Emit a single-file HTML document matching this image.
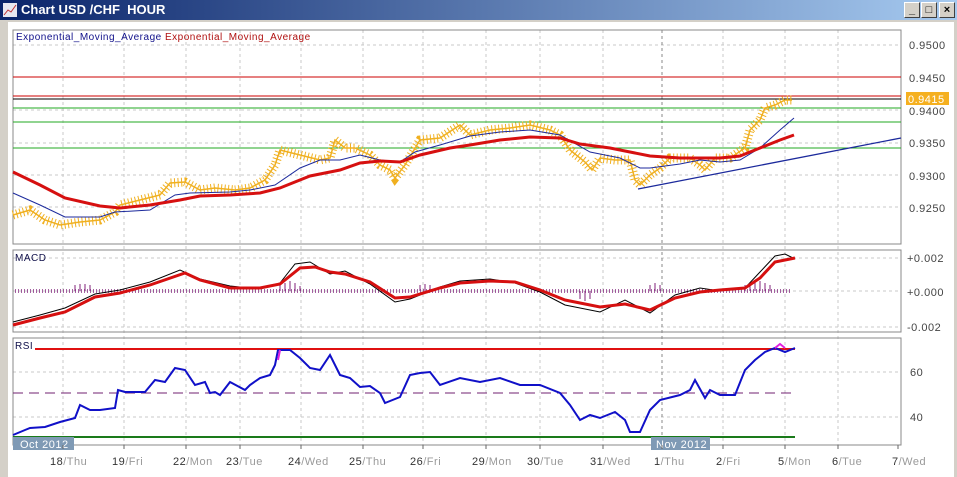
<!DOCTYPE html>
<html><head><style>
body{margin:0;width:957px;height:477px;overflow:hidden;background:#d4d0c8;font-family:"Liberation Sans",sans-serif;}
#t{position:absolute;left:0;top:0;width:957px;height:20px;background:linear-gradient(90deg,#0a246a,#a6caf0);}
#t span{position:absolute;left:21px;top:2px;color:#fff;font-weight:bold;font-size:13px;}
.b{position:absolute;top:2px;width:14px;height:14px;background:#d4d0c8;border:1px solid;border-color:#fff #404040 #404040 #fff;font-size:11px;text-align:center;line-height:14px;font-weight:bold}
svg{position:absolute;left:0;top:0}
</style></head><body>
<div id="t"><span>Chart USD /CHF &nbsp;HOUR</span></div>
<div class="b" style="left:904px">_</div><div class="b" style="left:921px">□</div><div class="b" style="left:939px">×</div>
<svg width="957" height="477" font-family="Liberation Sans, sans-serif">
<rect x="3" y="3" width="14" height="14" fill="#e8e8f0"/><path d="M4 15L8 10L11 12L16 5" stroke="#c03030" fill="none"/>
<rect x="8" y="22" width="946" height="455" fill="#fff"/>
<rect x="3" y="20" width="5" height="457" fill="#d4d0c8"/>
<g stroke="#c8c8c8" stroke-dasharray="3,3">
<path d="M63 30V445M124 30V445M186 30V445M240 30V445M301 30V445M363 30V445M423 30V445M486 30V445M540 30V445M603 30V445M723 30V445M785 30V445M838 30V445M13 45H901M13 77H901M13 110H901M13 143H901M13 175H901M13 207H901M13 258H901M13 291H901M13 327H901M13 372H901M13 417H901"/>
</g>
<path d="M662 30V445" stroke="#888" stroke-dasharray="3,3"/>
<g fill="none" stroke="#888"><rect x="13" y="30" width="888" height="214"/><rect x="13" y="250" width="888" height="82"/><rect x="13" y="338" width="888" height="107"/></g>
<g stroke-width="1"><path d="M13 77H901M13 96H901" stroke="#c00"/><path d="M13 99H901" stroke="#000"/><path d="M13 108H901M13 122H901M13 148H901" stroke="#2a2"/></g>
<path d="M638 189L901 138" stroke="#1c2a9c" stroke-width="1.3"/>
<polyline fill="none" stroke="#f0b020" stroke-width="1.5" points="13,215 30,210 45,220 60,225 80,222 100,220 115,212 120,205 140,200 160,195 170,183 185,182 200,190 215,188 235,190 250,188 265,180 275,165 280,150 300,155 320,160 330,158 335,140 345,148 355,148 370,155 380,165 390,170 395,178 405,165 420,140 440,138 460,125 470,135 490,130 510,128 530,125 550,130 560,135 570,150 585,162 592,170 600,158 615,160 630,160 635,180 640,185 650,175 660,168 670,158 690,158 700,165 705,170 715,158 730,158 745,148 750,130 760,120 765,108 775,105 785,100 792,100"/>
<polyline fill="none" stroke="#f0b020" stroke-width="9" stroke-dasharray="1,2.5" points="13,215 30,210 45,220 60,225 80,222 100,220 115,212 120,205 140,200 160,195 170,183 185,182 200,190 215,188 235,190 250,188 265,180 275,165 280,150 300,155 320,160 330,158 335,140 345,148 355,148 370,155 380,165 390,170 395,178 405,165 420,140 440,138 460,125 470,135 490,130 510,128 530,125 550,130 560,135 570,150 585,162 592,170 600,158 615,160 630,160 635,180 640,185 650,175 660,168 670,158 690,158 700,165 705,170 715,158 730,158 745,148 750,130 760,120 765,108 775,105 785,100 792,100"/>
<polyline fill="none" stroke="#1c2a9c" stroke-width="1" points="13,193 40,205 65,217 100,217 115,212 150,210 175,195 190,193 230,192 250,190 275,185 300,168 320,160 340,160 360,155 380,160 400,162 415,152 440,145 470,136 500,132 530,130 560,135 590,152 620,158 640,168 650,168 680,164 700,160 720,162 740,160 760,148 780,130 794,118"/>
<polyline fill="none" stroke="#d61010" stroke-width="3" points="13,172 40,185 65,198 100,206 120,208 150,205 180,200 200,196 230,195 260,193 280,188 310,176 340,170 360,163 380,161 400,162 420,155 450,148 470,145 500,140 530,137 560,138 580,144 610,148 630,152 650,156 680,158 720,158 740,156 760,148 780,140 794,135"/>
<path d="M15 291H790" stroke="#80207a" stroke-width="4" stroke-dasharray="1,2" opacity=".7"/>
<g stroke="#80207a" stroke-width="1"><path d="M75 291v-6M80 291v-7M85 291v-7M90 291v-6M280 291v-6M285 291v-8M290 291v-10M295 291v-8M300 291v-5M420 291v-6M425 291v-7M430 291v-6M580 291v8M585 291v10M590 291v8M650 291v-6M655 291v-8M660 291v-6M745 291v-6M750 291v-8M755 291v-10M760 291v-10M765 291v-8M770 291v-6"/></g>
<polyline fill="none" stroke="#000" stroke-width="1" points="13,322 40,315 65,308 95,294 120,290 150,282 180,270 200,279 230,286 260,289 280,283 295,264 310,262 330,274 345,271 370,284 395,302 410,299 440,287 460,281 490,279 515,283 540,292 565,305 600,312 625,300 650,313 675,295 700,288 720,291 745,288 760,272 775,256 785,254 795,259"/>
<polyline fill="none" stroke="#d61010" stroke-width="3" points="13,325 40,318 65,312 95,297 120,293 150,285 185,273 200,280 230,288 260,288 280,284 300,268 315,267 330,272 345,274 370,282 395,298 410,297 440,288 460,283 490,281 515,282 540,290 565,300 600,307 625,304 650,310 675,298 700,292 720,290 745,288 760,278 775,262 795,258"/>
<path d="M35 349H795" stroke="#e01010" stroke-width="2"/>
<path d="M13 393H795" stroke="#702070" stroke-dasharray="10,6"/>
<path d="M13 437H795" stroke="#1a7a1a" stroke-width="2"/>
<polyline fill="none" stroke="#1010c8" stroke-width="2" points="13,435 25,430 30,428 45,427 60,422 75,418 80,405 90,410 100,410 115,408 118,390 125,392 145,392 155,380 165,382 175,368 185,370 195,385 205,382 210,393 215,392 220,395 230,382 245,390 250,385 260,378 270,375 275,365 278,350 290,350 300,358 310,368 320,370 330,355 340,375 350,378 360,387 370,386 380,393 385,403 400,397 410,375 420,373 430,372 440,385 460,378 480,382 500,378 520,385 540,385 560,393 570,405 580,420 590,415 600,418 615,412 625,420 630,432 640,432 650,410 660,400 680,395 690,390 695,380 705,398 710,390 720,395 735,395 745,370 755,360 765,352 775,348 785,352 795,348"/>
<path d="M278 360L280 350M775 348l5 -4 5 4" stroke="#e020e0" stroke-width="2" fill="none"/>
<g font-size="10" fill="#333" letter-spacing=".5">
<text x="16" y="40" fill="#10108a">Exponential_Moving_Average <tspan fill="#b01010">Exponential_Moving_Average</tspan></text>
<text x="15" y="261" fill="#10104a">MACD</text><text x="15" y="349" fill="#10104a">RSI</text>
<g font-size="11" fill="#444"><text x="909" y="49">0.9500</text><text x="909" y="82">0.9450</text><text x="909" y="115">0.9400</text><text x="909" y="147">0.9350</text><text x="909" y="180">0.9300</text><text x="909" y="212">0.9250</text>
<text x="907" y="262">+0.002</text><text x="907" y="296">+0.000</text><text x="907" y="331">-0.002</text><text x="910" y="376">60</text><text x="910" y="421">40</text></g>
<rect x="906" y="92" width="43" height="13" fill="#f5b020"/><text x="908" y="103" fill="#fff" font-size="11">0.9415</text>
<rect x="13" y="437" width="61" height="13" fill="#7f9ab5"/><text x="20" y="448" fill="#fff" font-size="11">Oct 2012</text>
<rect x="651" y="437" width="59" height="13" fill="#7f9ab5"/><text x="656" y="448" fill="#fff" font-size="11">Nov 2012</text>
<g font-size="11" fill="#999"><text x="50" y="465"><tspan fill="#333">18</tspan>/Thu</text><text x="112" y="465"><tspan fill="#333">19</tspan>/Fri</text><text x="173" y="465"><tspan fill="#333">22</tspan>/Mon</text><text x="226" y="465"><tspan fill="#333">23</tspan>/Tue</text><text x="288" y="465"><tspan fill="#333">24</tspan>/Wed</text><text x="349" y="465"><tspan fill="#333">25</tspan>/Thu</text><text x="410" y="465"><tspan fill="#333">26</tspan>/Fri</text><text x="472" y="465"><tspan fill="#333">29</tspan>/Mon</text><text x="527" y="465"><tspan fill="#333">30</tspan>/Tue</text><text x="590" y="465"><tspan fill="#333">31</tspan>/Wed</text><text x="654" y="465"><tspan fill="#333">1</tspan>/Thu</text><text x="716" y="465"><tspan fill="#333">2</tspan>/Fri</text><text x="778" y="465"><tspan fill="#333">5</tspan>/Mon</text><text x="832" y="465"><tspan fill="#333">6</tspan>/Tue</text><text x="892" y="465"><tspan fill="#333">7</tspan>/Wed</text></g>
</g>
<g stroke="#666"><path d="M63 445v4M124 445v4M186 445v4M240 445v4M301 445v4M363 445v4M423 445v4M486 445v4M540 445v4M603 445v4M662 445v4M723 445v4M785 445v4M838 445v4M898 445v4"/></g>
</svg>
</body></html>
